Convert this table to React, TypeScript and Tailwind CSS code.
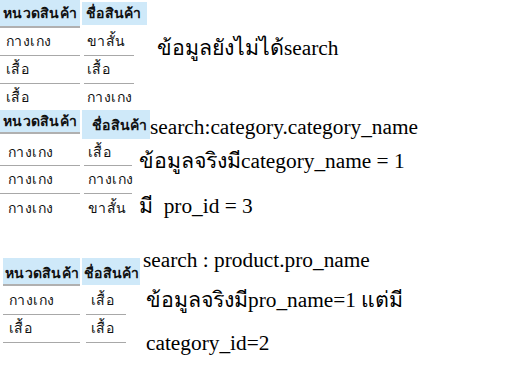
import React from "react";

const sans = "font-['Tahoma','DejaVu_Sans','Noto_Sans',sans-serif]";
const serif = "font-['Liberation_Serif','Times_New_Roman',serif]";
const cellText = "text-[14px] tracking-[0.4px] text-[#111]";

function Row({ a, b, w1, w2, gap, pl1, pl2, h, line = true }: { a: string; b: string; w1: number; w2: number; gap: number; pl1: number; pl2: number; h: number; line?: boolean }) {
  const border = line ? "border-b border-[#a8a8a8]" : "";
  return (
    <div className="flex" style={{ height: h }}>
      <div className={`${border} flex items-center shrink-0 ${cellText}`} style={{ width: w1, paddingLeft: pl1 }}>
        {a}
      </div>
      <div className={`${border} flex items-center shrink-0 whitespace-nowrap ${cellText}`} style={{ width: w2, marginLeft: gap, paddingLeft: pl2 }}>
        {b}
      </div>
    </div>
  );
}

const head = "bg-[#cfe9f9] font-bold text-[14px] tracking-[0.3px] text-[#111] shrink-0 whitespace-nowrap";

export default function App() {
  return (
    <div className={`w-[512px] h-[384px] bg-white overflow-hidden text-black ${sans}`}>
      {/* Block 1 */}
      <div className="flex h-[110px]">
        <div className="w-[150px] shrink-0">
          <div className="flex items-start h-[28px]">
            <div className={`w-[80px] h-[28px] border-b-2 border-[#b0b0b0] pl-[3px] pt-[3px] ${head}`}>หนวดสินค้า</div>
            <div className={`ml-[2px] mt-[2px] w-[65px] h-[23px] pl-[4px] pt-[1px] ${head}`}>ชื่อสินค้า</div>
          </div>
          <Row a="กางเกง" b="ขาสั้น" w1={80} w2={50} gap={4} pl1={6} pl2={3} h={28} />
          <Row a="เสื้อ" b="เสื้อ" w1={80} w2={50} gap={4} pl1={6} pl2={3} h={28} />
          <Row a="เสื้อ" b="กางเกง" w1={80} w2={50} gap={4} pl1={6} pl2={3} h={26} line={false} />
        </div>
        <div className={`ml-[7px] mt-[36px] text-[21.33px] leading-[24px] whitespace-nowrap ${serif}`}>ข้อมูลยังไม่ได้search</div>
      </div>

      {/* Block 2 */}
      <div className="flex h-[140px]">
        <div className="w-[139px] shrink-0">
          <div className="flex items-start h-[29px]">
            <div className={`w-[80px] h-[24px] border-b-2 border-[#b0b0b0] pl-[3px] pt-[1px] ${head}`}>หนวดสินค้า</div>
            <div className={`ml-[2px] w-[68px] h-[29px] pl-[10px] pt-[5px] ${head}`}>ชื่อสินค้า</div>
          </div>
          <Row a="กางเกง" b="เสื้อ" w1={80} w2={48} gap={4} pl1={8} pl2={4} h={27} />
          <Row a="กางเกง" b="กางเกง" w1={80} w2={48} gap={4} pl1={8} pl2={4} h={28} />
          <Row a="กางเกง" b="ขาสั้น" w1={80} w2={48} gap={4} pl1={8} pl2={4} h={28} line={false} />
        </div>
        <div className={`flex flex-col text-[21.33px] whitespace-nowrap ${serif}`}>
          <div className="ml-[11px] mt-[5px] leading-[24px]">search:category.category_name</div>
          <div className="mt-[8px] leading-[28px]">ข้อมูลจริงมีcategory_name = 1</div>
          <div className="mt-[17px] leading-[28px] whitespace-pre">มี  pro_id = 3</div>
        </div>
      </div>

      {/* Block 3 */}
      <div className="flex h-[134px] pt-[8px]">
        <div className="w-[143px] shrink-0 pl-[3px]">
          <div className="flex items-start h-[28px]">
            <div className={`w-[77px] h-[28px] border-b-2 border-[#b0b0b0] pl-[2px] pt-[5px] ${head}`}>หนวดสินค้า</div>
            <div className={`ml-[2px] w-[58px] h-[27px] pl-[2px] pt-[5px] ${head}`}>ชื่อสินค้า</div>
          </div>
          <Row a="กางเกง" b="เสื้อ" w1={77} w2={40} gap={6} pl1={6} pl2={5} h={29} />
          <Row a="เสื้อ" b="เสื้อ" w1={77} w2={40} gap={6} pl1={6} pl2={5} h={28} />
        </div>
        <div className={`flex flex-col text-[21.33px] whitespace-nowrap ${serif}`}>
          <div className="-mt-[10px] leading-[24px]">search : product.pro_name</div>
          <div className="ml-[3px] mt-[14px] leading-[28px]">ข้อมูลจริงมีpro_name=1 แต่มี</div>
          <div className="ml-[3px] mt-[17px] leading-[24px]">category_id=2</div>
        </div>
      </div>
    </div>
  );
}
